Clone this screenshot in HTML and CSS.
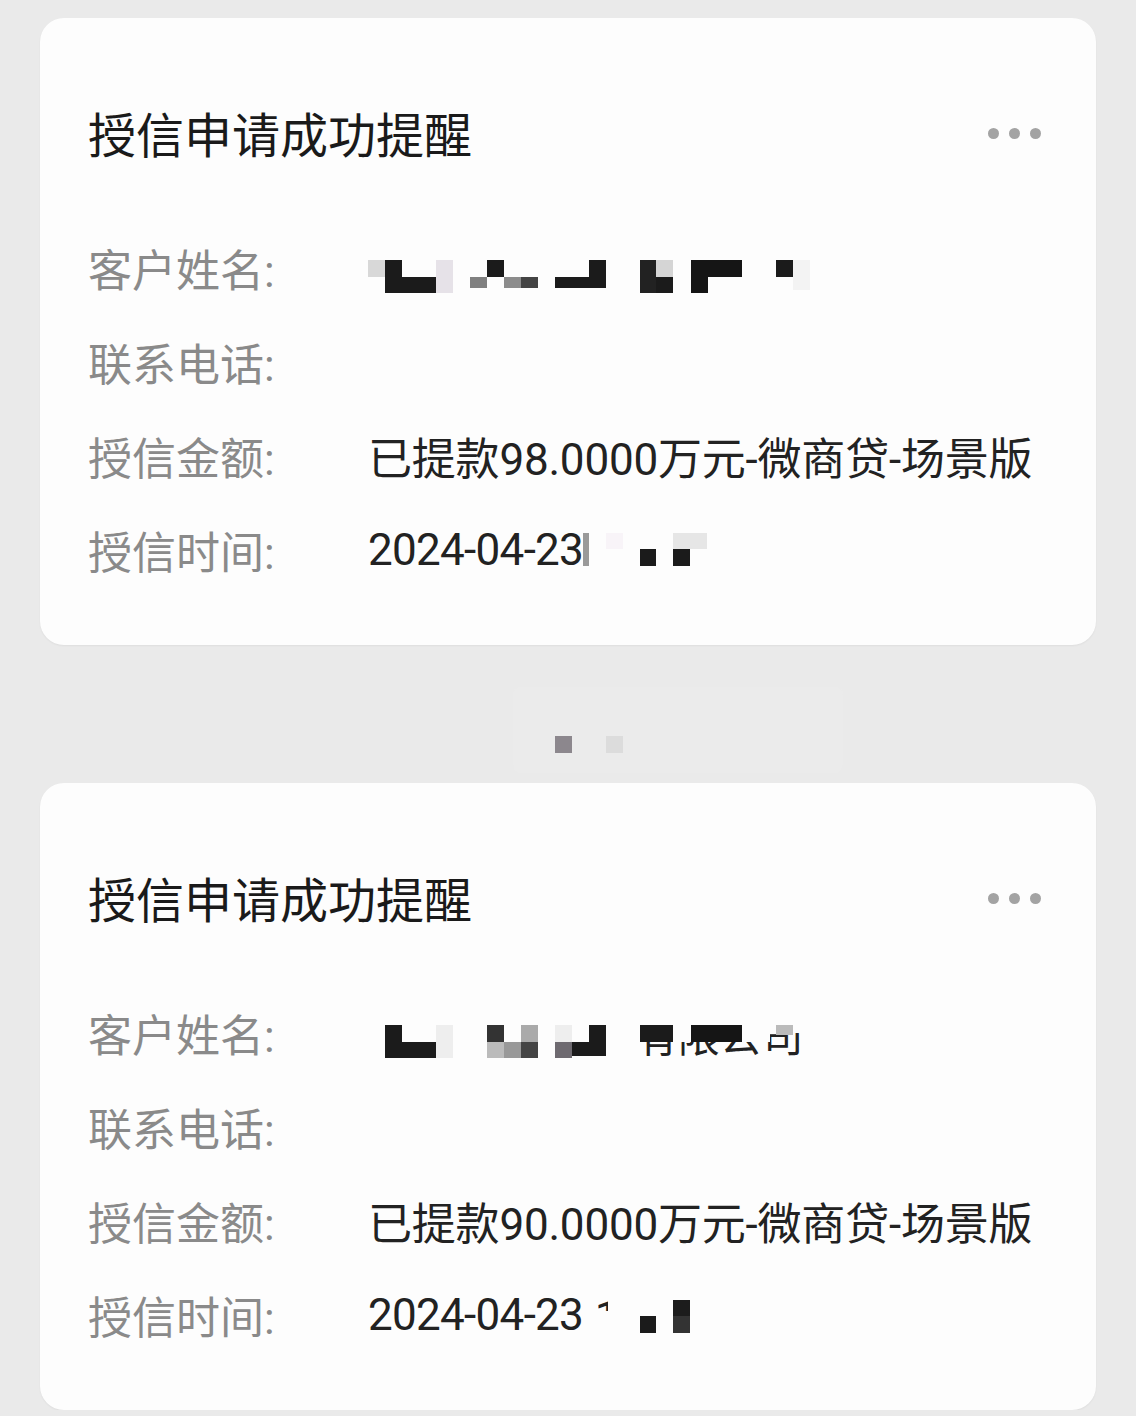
FILE: index.html
```html
<!DOCTYPE html>
<html lang="zh-CN">
  <head>
    <meta charset="UTF-8" />
    <meta name="viewport" content="width=device-width, initial-scale=1.0" />
    <title>授信申请成功提醒</title>
    <link rel="stylesheet" href="styles.css">
  </head>
  <body>
    <div class="page">
      <!-- 第一条消息 -->
      <div class="card">
        <div class="head">
          <h2 class="title">授信申请成功提醒</h2>
          <div class="more"><i></i><i></i><i></i></div>
        </div>
        <div class="rows">
          <div class="row">
            <span class="label">客户姓名:</span>
            <span class="value">
              <svg class="mosaic" width="445" height="52" viewBox="0 0 445 52">
                <rect x="0" y="18" width="17" height="17" fill="#d8d8d8"/>
                <rect x="17" y="18" width="17" height="33" fill="#1b1b1b"/>
                <rect x="34" y="35" width="34" height="16" fill="#1b1b1b"/>
                <rect x="68" y="18" width="17" height="33" fill="#e6e2e8"/>
                <rect x="102" y="35" width="17" height="11" fill="#808080"/>
                <rect x="119" y="18" width="17" height="17" fill="#1b1b1b"/>
                <rect x="136" y="35" width="17" height="11" fill="#8c8c8c"/>
                <rect x="153" y="35" width="17" height="11" fill="#444"/>
                <rect x="187" y="35" width="51" height="11" fill="#1b1b1b"/>
                <rect x="221" y="18" width="17" height="17" fill="#1b1b1b"/>
                <rect x="272" y="18" width="17" height="33" fill="#222"/>
                <rect x="288" y="18" width="17" height="17" fill="#d5d5d5"/>
                <rect x="288" y="35" width="17" height="16" fill="#1b1b1b"/>
                <rect x="323" y="18" width="51" height="17" fill="#151515"/>
                <rect x="323" y="35" width="17" height="16" fill="#151515"/>
                <rect x="408" y="18" width="17" height="17" fill="#1b1b1b"/>
                <rect x="425" y="18" width="17" height="30" fill="#f3f3f3"/>
              </svg>
            </span>
          </div>
          <div class="row">
            <span class="label">联系电话:</span>
            <span class="value"></span>
          </div>
          <div class="row">
            <span class="label">授信金额:</span>
            <span class="value">已提款98.0000万元-微商贷-场景版</span>
          </div>
          <div class="row">
            <span class="label">授信时间:</span>
            <span class="value">
              <span class="date">2024-04-23</span>
              <svg class="mosaic" width="130" height="52" viewBox="0 0 130 52">
                <rect x="0" y="9" width="6" height="33" fill="#9a9a9a"/>
                <rect x="23" y="9" width="17" height="16" fill="#f8f4f8"/>
                <rect x="57" y="25" width="16" height="17" fill="#1b1b1b"/>
                <rect x="90" y="9" width="34" height="16" fill="#e6e6e6"/>
                <rect x="90" y="25" width="17" height="17" fill="#1b1b1b"/>
              </svg>
            </span>
          </div>
        </div>
      </div>

      <!-- 中间的时间（已打码） -->
      <div class="gap">
        <div class="stamp">
          <svg width="70" height="17" viewBox="0 0 70 17">
            <rect x="0" y="0" width="17" height="17" fill="#8c878d"/>
            <rect x="51" y="0" width="17" height="17" fill="#dcdcdc"/>
          </svg>
        </div>
      </div>

      <!-- 第二条消息 -->
      <div class="card">
        <div class="head">
          <h2 class="title">授信申请成功提醒</h2>
          <div class="more"><i></i><i></i><i></i></div>
        </div>
        <div class="rows">
          <div class="row">
            <span class="label">客户姓名:</span>
            <span class="value">
              <svg class="mosaic" width="445" height="52" viewBox="0 0 445 52">
                <rect x="17" y="18" width="17" height="33" fill="#1b1b1b"/>
                <rect x="34" y="35" width="34" height="16" fill="#1b1b1b"/>
                <rect x="68" y="18" width="17" height="33" fill="#eeeeee"/>
                <rect x="119" y="18" width="17" height="17" fill="#333"/>
                <rect x="119" y="35" width="17" height="16" fill="#bbb"/>
                <rect x="136" y="35" width="17" height="16" fill="#999"/>
                <rect x="153" y="18" width="17" height="17" fill="#aaa"/>
                <rect x="153" y="35" width="17" height="16" fill="#444"/>
                <rect x="187" y="18" width="17" height="17" fill="#eeeeee"/>
                <rect x="187" y="35" width="17" height="16" fill="#6e6a70"/>
                <rect x="204" y="35" width="34" height="14" fill="#1b1b1b"/>
                <rect x="221" y="18" width="17" height="17" fill="#1b1b1b"/>
                <text x="268" y="45" class="svgtext">有限公司</text>
                <rect x="262" y="0" width="140" height="35" fill="#fdfdfd"/>
                <rect x="402" y="0" width="43" height="26" fill="#fdfdfd"/>
                <rect x="272" y="18" width="33" height="17" fill="#1b1b1b"/>
                <rect x="323" y="18" width="51" height="17" fill="#151515"/>
                <rect x="408" y="18" width="17" height="10" fill="#bbb"/>
              </svg>
            </span>
          </div>
          <div class="row">
            <span class="label">联系电话:</span>
            <span class="value"></span>
          </div>
          <div class="row">
            <span class="label">授信金额:</span>
            <span class="value">已提款90.0000万元-微商贷-场景版</span>
          </div>
          <div class="row">
            <span class="label">授信时间:</span>
            <span class="value">
              <span class="date">2024-04-23</span>
              <svg class="mosaic" width="130" height="52" viewBox="0 0 130 52">
                <text x="12" y="42" class="svgtext">1</text>
                <rect x="25" y="0" width="20" height="52" fill="#fdfdfd"/>
                <rect x="0" y="22" width="45" height="30" fill="#fdfdfd"/>
                <rect x="57" y="27" width="16" height="17" fill="#1b1b1b"/>
                <rect x="90" y="11" width="17" height="16" fill="#1c1c1c"/>
                <rect x="90" y="27" width="17" height="17" fill="#333"/>
              </svg>
            </span>
          </div>
        </div>
      </div>
    </div>
  </body>
</html>
```

FILE: styles.css
```css
* {
  margin: 0;
  padding: 0;
  box-sizing: border-box;
}
body {
  background: #eaeaea;
  font-family: Roboto, "Noto Sans CJK SC", sans-serif;
  color: #222;
}
.page {
  padding: 18px 40px 0 40px;
}
/* thẻ tin nhắn */
.card {
  background: #fdfdfd;
  border-radius: 24px;
  padding: 89px 48px 48px 48px;
  box-shadow: 0 1px 2px rgba(0, 0, 0, 0.05);
}
.head {
  display: flex;
  justify-content: space-between;
  align-items: center;
  height: 60px;
}
.title {
  font-size: 48px;
  font-weight: 400;
  color: #1a1a1a;
  line-height: 60px;
}
.more {
  display: flex;
  gap: 10px;
  margin-right: 7px;
  margin-bottom: 8px;
}
.more i {
  display: block;
  width: 11px;
  height: 11px;
  border-radius: 50%;
  background: #a3a3a3;
}
.rows {
  margin-top: 54px;
}
.row {
  display: flex;
  align-items: center;
  height: 94px;
  font-size: 44px;
}
.label {
  width: 280px;
  flex-shrink: 0;
  color: #8a8a8a;
}
.value {
  display: flex;
  align-items: center;
  color: #222;
  letter-spacing: -0.2px;
}
.date {
  letter-spacing: -0.7px;
}
.mosaic {
  display: block;
}
.svgtext {
  font-family: Roboto, "Noto Sans CJK SC", sans-serif;
  font-size: 42px;
  fill: #222;
}
/* khoảng giữa hai thẻ */
.gap {
  height: 138px;
  padding-top: 42px;
}
.stamp {
  width: 330px;
  height: 86px;
  margin-left: 473px;
  padding: 49px 0 0 42px;
  background: #ebebeb;
  border-radius: 8px;
}
.stamp svg {
  display: block;
}
```
